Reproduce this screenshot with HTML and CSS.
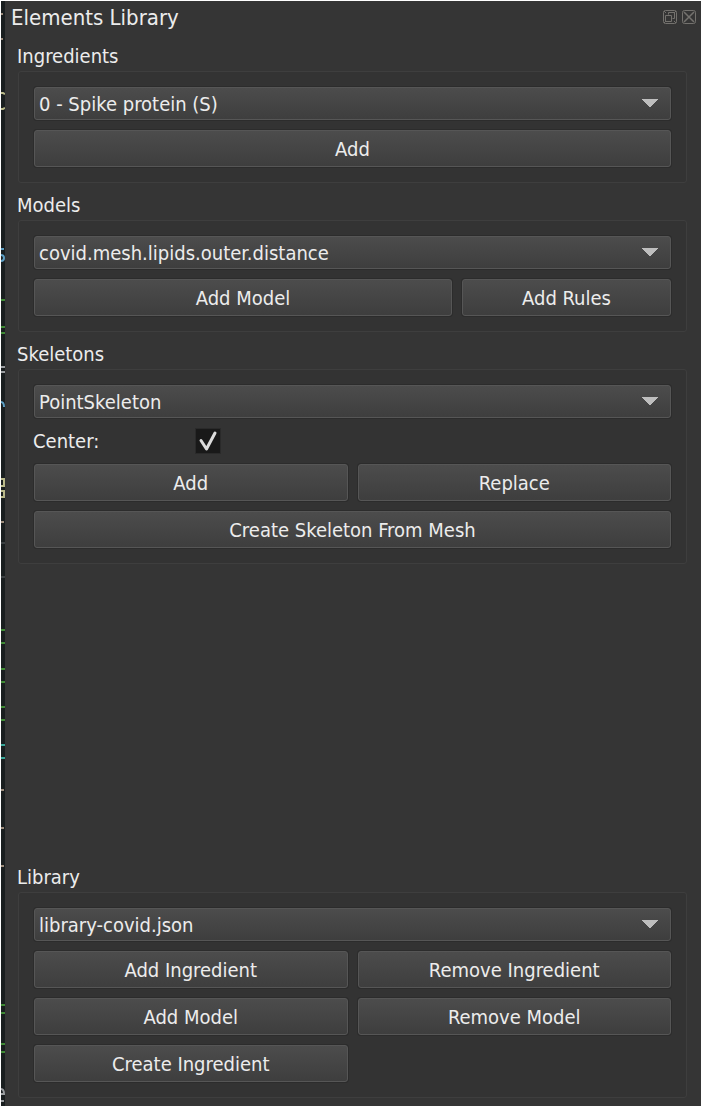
FILE: index.html
```html
<!DOCTYPE html>
<html lang="en">
<head>
<meta charset="utf-8">
<title>Elements Library</title>
<link rel="stylesheet" href="styles.css">
</head>
<body>
<div class="window">
  <div class="editor-edge" aria-hidden="true">
    <svg width="4" height="1105" viewBox="0 1 4 1105" fill="none" stroke-width="2">
      <path stroke="#9c8c7c" d="M0 14h2M0 39h2M0 522h3M0 790h3M0 828h3M0 866h3"/>
      <path stroke="#b9b98a" d="M0 93h2l2 1M0 109h2l2-1M0 479h3v7H0M0 491h3v6H0"/>
      <path stroke="#5d9fc4" d="M0 249h3M0 255q3 0 3 3t-3 3M0 402q3 0 3 5"/>
      <path stroke="#3f8a35" d="M0 300h4M0 327h4M0 333h4M0 630h4M0 643h4M0 669h4M0 682h4M0 707h4M0 720h4M0 1005h4M0 1013h4M0 1044h4M0 1052h4"/>
      <path stroke="#38a597" d="M0 745h4M0 758h4"/>
      <path stroke="#9a9da0" d="M0 367h4M0 372h4M0 1089q3 0 3 5H0M0 1101h3"/>
      <path stroke="#3b4042" d="M0 543h4M0 577h4"/>
    </svg>
  </div>
  <main class="dock">
    <header class="titlebar">
      <h1 class="title">Elements Library</h1>
      <button class="tool" aria-label="Float panel">
        <svg width="14" height="14" viewBox="0 0 14 14" fill="none" stroke="#74726e"><rect x=".5" y=".5" width="13" height="13" rx="2"/><path d="M5.500 4.500V2.500h6v6h-2M2.500 5.500h6v6h-6zM1 1l2 2M13 1l-2 2M1 13l2-2M13 13l-2-2"/></svg>
      </button>
      <button class="tool" aria-label="Close panel">
        <svg width="14" height="14" viewBox="0 0 14 14" fill="none" stroke="#74726e"><rect x=".5" y=".5" width="13" height="13" rx="2"/><path d="M2 2l10 10M12 2L2 12" stroke-width="1.500"/></svg>
      </button>
    </header>

    <section class="group">
      <label class="group-label" for="ingredient">Ingredients</label>
      <div class="frame">
        <select class="combo" id="ingredient"><option>0 - Spike protein (S)</option></select>
        <button class="btn">Add</button>
      </div>
    </section>

    <section class="group">
      <label class="group-label" for="model">Models</label>
      <div class="frame">
        <select class="combo" id="model"><option>covid.mesh.lipids.outer.distance</option></select>
        <div class="row wide-first">
          <button class="btn">Add Model</button>
          <button class="btn">Add Rules</button>
        </div>
      </div>
    </section>

    <section class="group">
      <label class="group-label" for="skeleton">Skeletons</label>
      <div class="frame">
        <select class="combo" id="skeleton"><option>PointSkeleton</option></select>
        <div class="field">
          <label class="field-label" for="center">Center:</label>
          <span class="check">
            <input class="check-input" type="checkbox" id="center" checked>
            <svg class="check-mark" width="26" height="26" viewBox="0 0 26 26" fill="none" stroke="#dcdcdc" stroke-width="3" stroke-linecap="round" stroke-linejoin="round"><path d="M6 12.500l5.500 8.500L20 5"/></svg>
          </span>
        </div>
        <div class="row">
          <button class="btn">Add</button>
          <button class="btn">Replace</button>
        </div>
        <button class="btn">Create Skeleton From Mesh</button>
      </div>
    </section>

    <section class="group group-bottom">
      <label class="group-label" for="library">Library</label>
      <div class="frame">
        <select class="combo" id="library"><option>library-covid.json</option></select>
        <div class="row">
          <button class="btn">Add Ingredient</button>
          <button class="btn">Remove Ingredient</button>
          <button class="btn">Add Model</button>
          <button class="btn">Remove Model</button>
          <button class="btn">Create Ingredient</button>
        </div>
      </div>
    </section>
  </main>
</div>
</body>
</html>
```
FILE: styles.css
```css
* { box-sizing: border-box; }

body {
  margin: 0;
  background: #353535;
  color: #ececec;
  font-family: "DejaVu Sans Condensed", "Noto Sans", sans-serif;
  font-size: 20px;
  line-height: 26px;
}

button, select, input { font: inherit; color: inherit; margin: 0; }

.window {
  display: flex;
  min-height: 100vh;
  border-top: 1px solid #fff;
  border-left: 1px solid #fff;
}

.editor-edge {
  flex: none;
  width: 4px;
  background: #191e1f;
  overflow: hidden;
}

.editor-edge svg { display: block; }

.dock {
  flex: 1;
  display: flex;
  flex-direction: column;
  padding: 0 14px 8px 13px;
}

.titlebar {
  display: flex;
  align-items: center;
  gap: 5px;
  height: 33px;
  margin: 0 -9px 0 -7px;
}

.title {
  flex: 1;
  margin: 0;
  font-size: 22px;
  font-weight: 400;
}

.tool {
  display: flex;
  width: 14px;
  height: 14px;
  margin-bottom: 2px;
  padding: 0;
  border: 0;
  background: none;
}

.group { display: flex; flex-direction: column; }

.group-bottom { margin-top: auto; }

.group-label {
  height: 37px;
  padding-top: 9px;
  margin-left: -1px;
}

.frame {
  display: flex;
  flex-direction: column;
  gap: 10px;
  padding: 15px;
  border: 1px solid #3e3e3e;
  border-radius: 3px;
  background: #333;
}

.row {
  display: grid;
  grid-template-columns: 1fr 1fr;
  gap: 10px;
}

.wide-first { grid-template-columns: 2fr 1fr; }

.btn, .combo {
  border: 1px solid #565656;
  border-radius: 3px;
  background-color: #454545;
  background-image: linear-gradient(#4c4c4c, #3e3e3e);
  box-shadow: 0 0 0 1px #2c2c2c;
}

.btn {
  width: 100%;
  height: 37px;
  padding: 0;
}

.combo {
  appearance: none;
  width: 100%;
  height: 33px;
  padding: 0 40px 0 4px;
  background-image:
    linear-gradient(to bottom right, #bebebe 50%, transparent 51%),
    linear-gradient(to bottom left, #bebebe 50%, transparent 51%),
    linear-gradient(#4c4c4c, #3e3e3e);
  background-repeat: no-repeat;
  background-position: right 12px top 11px, right 20px top 11px, 0 0;
  background-size: 8px 8px, 8px 8px, 100% 100%;
}

.field {
  display: grid;
  grid-template-columns: 161px auto;
  justify-content: start;
  align-items: center;
}

.field-label { margin-left: -1px; }

.check { display: grid; }

.check-input, .check-mark { grid-area: 1 / 1; }

.check-input {
  appearance: none;
  width: 26px;
  height: 26px;
  background: #191919;
  border: 1px solid #2a2a2a;
}

.check-mark { visibility: hidden; pointer-events: none; }

.check-input:checked + .check-mark { visibility: visible; }
```
